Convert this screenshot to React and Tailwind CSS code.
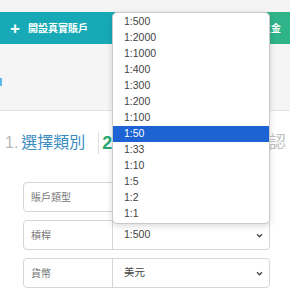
import React from "react";

const LEVERAGES = ["1:500", "1:2000", "1:1000", "1:400", "1:300", "1:200", "1:100", "1:50", "1:33", "1:10", "1:5", "1:2", "1:1"];

function Chevron() {
  return (
    <svg width="7" height="5" viewBox="0 0 8 6" className="text-[#444]">
      <path d="M1 1.5 L4 4.5 L7 1.5" fill="none" stroke="currentColor" strokeWidth="1.6" />
    </svg>
  );
}

function FieldRow({ label, value, select }) {
  return (
    <div className="flex h-[30px] w-[247px] rounded-[4px] border border-[#d6d6d6] bg-white text-[10px]">
      <div className="flex w-[89px] items-center border-r border-[#d6d6d6] pl-[7px] text-[#777]">{label}</div>
      <div className="flex flex-1 items-center justify-between pl-[11px] pr-[6px] text-[10.5px] text-[#444]">
        <span>{value}</span>
        {select ? <Chevron /> : null}
      </div>
    </div>
  );
}

export default function App() {
  return (
    <div
      className="relative h-[294px] w-[290px] overflow-hidden bg-white"
      style={{ fontFamily: '"Liberation Sans", "Noto Sans CJK TC", sans-serif' }}
    >
      <div className="h-[12px] bg-[#f4f4f4]" />
      <div className="flex h-[32px]">
        <div className="flex w-[180px] items-center gap-[8px] bg-[#17aab6] pl-[10px] text-[10px] font-bold text-white">
          <span className="text-[17px] leading-none">+</span>
          <span>開設真實賬戶</span>
        </div>
        <div className="flex flex-1 items-center justify-end bg-[#2fb389] pr-[9px] text-[10px] font-bold text-white">模擬賬戶開立金</div>
      </div>
      <div className="relative h-[67px] border-b border-[#e4e4e4] bg-[#f5f5f5]">
        <div className="absolute left-0 top-[34px] h-[8px] w-[2px] bg-[#5bb8e8]" />
      </div>

      <div className="flex h-[64px] items-center whitespace-nowrap pl-[5px] text-[16px]">
        <span className="text-[#b8b8b8]">1.</span>
        <span className="ml-[3px] text-[#3c8dbf]">選擇類別</span>
        <span className="ml-[13px] h-[22px] w-px bg-[#ddd]" />
        <span className="ml-[3px] text-[18px] font-bold text-[#27a86e]">2</span>
        <span className="flex-1" />
        <span className="mr-[4px] text-[17px] text-[#c0c0c0]">認</span>
      </div>

      <div className="mt-[7px] flex flex-col gap-[8px] pl-[23px]">
        <FieldRow label="賬戶類型" value="" />
        <FieldRow label="槓桿" value="1:500" select />
        <FieldRow label="貨幣" value="美元" select />
      </div>

      <div className="absolute left-[112px] top-[12px] w-[158px] rounded-[5px] border border-[#c9c9c9] bg-white py-px shadow-[0_2px_6px_rgba(0,0,0,0.15)]">
        {LEVERAGES.map((v) => (
          <div
            key={v}
            className={
              v === "1:50"
                ? "flex h-[16px] items-center bg-[#1d63d3] pl-[11px] text-[10.5px] text-white"
                : "flex h-[16px] items-center pl-[11px] text-[10.5px] text-[#444]"
            }
          >
            {v}
          </div>
        ))}
      </div>
    </div>
  );
}
